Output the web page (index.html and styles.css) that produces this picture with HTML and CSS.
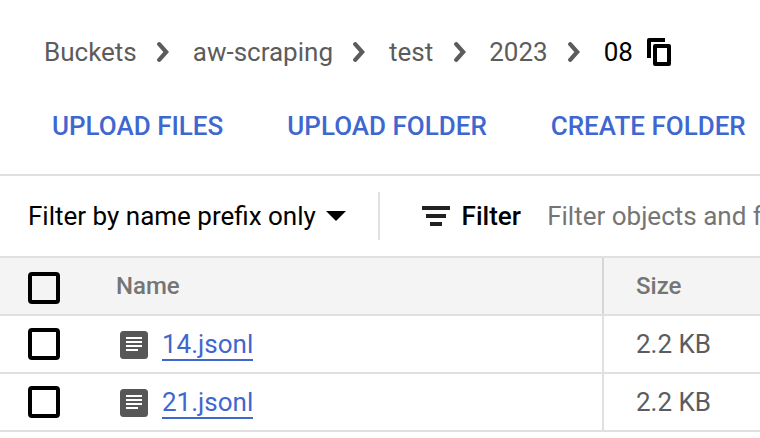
FILE: index.html
```html
<!DOCTYPE html>
<html lang="en">
<head>
<meta charset="utf-8">
<title>Bucket details</title>
<link rel="stylesheet" href="styles.css">
</head>
<body>
<nav class="crumbs">
  <a class="crumb">Buckets</a>
  <svg class="chevron" width="12" height="20" viewBox="0 0 12 20"><path d="M2.2 2.2l7 7.8-7 7.8"/></svg>
  <a class="crumb">aw-scraping</a>
  <svg class="chevron" width="12" height="20" viewBox="0 0 12 20"><path d="M2.2 2.2l7 7.8-7 7.8"/></svg>
  <a class="crumb">test</a>
  <svg class="chevron" width="12" height="20" viewBox="0 0 12 20"><path d="M2.2 2.2l7 7.8-7 7.8"/></svg>
  <a class="crumb">2023</a>
  <svg class="chevron" width="12" height="20" viewBox="0 0 12 20"><path d="M2.2 2.2l7 7.8-7 7.8"/></svg>
  <span class="crumb current">08</span>
  <svg class="copy" width="24" height="28" viewBox="0 0 24 28"><path d="M18 0v4H4v16H0V2q0-2 2-2z"/><path fill-rule="evenodd" d="M8 6h14q2 0 2 2v18q0 2-2 2H8q-2 0-2-2V8q0-2 2-2zm2 4v14h10V10z"/></svg>
</nav>
<div class="actions">
  <a class="action">UPLOAD FILES</a>
  <a class="action">UPLOAD FOLDER</a>
  <a class="action">CREATE FOLDER</a>
</div>
<div class="filterbar">
  <div class="prefix">Filter by name prefix only<svg class="caret" width="20" height="10" viewBox="0 0 20 10"><path d="M0 0h20L10 10z"/></svg></div>
  <div class="filter">
    <svg class="lines" width="28" height="20" viewBox="0 0 28 20"><path d="M0 0h28v4H0zM4 8h20v4H4zM8 16h12v4H8z"/></svg>
    <span class="label">Filter</span>
    <span class="hint">Filter objects and folders</span>
  </div>
</div>
<div class="table">
  <div class="row head">
    <div class="cell check"><span class="box"></span></div>
    <div class="cell name">Name</div>
    <div class="cell size">Size</div>
  </div>
  <div class="row">
    <div class="cell check"><span class="box"></span></div>
    <div class="cell name"><svg class="file" width="28" height="28" viewBox="0 0 28 28"><rect width="28" height="28" rx="3.5" fill="#575757"/><path fill="#fff" d="M6 6h16v2H6zM6 10h16v2H6zM6 14h16v2H6zM6 18h12v2H6z"/></svg><a class="link">14.jsonl</a></div>
    <div class="cell size">2.2 KB</div>
  </div>
  <div class="row">
    <div class="cell check"><span class="box"></span></div>
    <div class="cell name"><svg class="file" width="28" height="28" viewBox="0 0 28 28"><rect width="28" height="28" rx="3.5" fill="#575757"/><path fill="#fff" d="M6 6h16v2H6zM6 10h16v2H6zM6 14h16v2H6zM6 18h12v2H6z"/></svg><a class="link">21.jsonl</a></div>
    <div class="cell size">2.2 KB</div>
  </div>
</div>
</body>
</html>
```
FILE: styles.css
```css
* { box-sizing: border-box; }
body {
  margin: 0;
  height: 438px;
  overflow: hidden;
  background: #fff;
  color: #000;
  font: 400 26px/30px Roboto, sans-serif;
  white-space: nowrap;
}
svg { display: block; flex: none; }
.crumbs {
  display: flex;
  align-items: center;
  height: 74px;
  padding: 30px 0 0 44px;
}
.crumb { color: #5c5c5c; }
.current { color: #000; }
.chevron {
  margin: 0 23.6px 0 20.4px;
  fill: none;
  stroke: #5c5c5c;
  stroke-width: 4.2;
  stroke-linecap: round;
}
.copy { margin-left: 14px; }
.actions {
  display: flex;
  align-items: center;
  gap: 64px;
  height: 102px;
  padding: 4px 0 0 52px;
  border-bottom: 2px solid #e0e0e0;
}
.action { color: #3f67d0; font-weight: 500; }
.filterbar {
  display: flex;
  align-items: center;
  height: 82px;
  border-bottom: 2px solid #e0e0e0;
}
.prefix {
  display: flex;
  align-items: center;
  flex: none;
  width: 380px;
  height: 48px;
  padding-left: 28px;
  border-right: 2px solid #e0e0e0;
}
.caret { margin-left: 10.4px; }
.filter {
  display: flex;
  align-items: center;
  flex: 1;
  min-width: 0;
  padding-left: 42px;
}
.lines { fill: #212121; }
.label { margin-left: 11.6px; font-weight: 500; }
.hint {
  flex: 1;
  min-width: 0;
  overflow: hidden;
  margin-left: 26.2px;
  color: #757575;
}
.row {
  display: flex;
  height: 58px;
  border-bottom: 2px solid #e0e0e0;
}
.cell { display: flex; align-items: center; flex: none; }
.check { width: 116px; padding-left: 28px; }
.box {
  width: 32px;
  height: 32px;
  border: 4px solid #000;
  border-radius: 4px;
}
.name { width: 488px; padding-left: 4px; border-right: 2px solid #e0e0e0; }
.size { padding-left: 32px; color: #5c5c5c; }
.head { background: #f4f4f4; color: #757575; font-size: 24px; font-weight: 500; }
.head .name { padding-left: 0; border-color: #d6d6d6; }
.head .size { color: #757575; }
.head .check { padding-top: 4px; }
.file { margin-top: 2px; }
.link {
  margin: 2px 0 0 14px;
  color: #3f67d0;
  border-bottom: 2px solid #3f67d0;
}
```
